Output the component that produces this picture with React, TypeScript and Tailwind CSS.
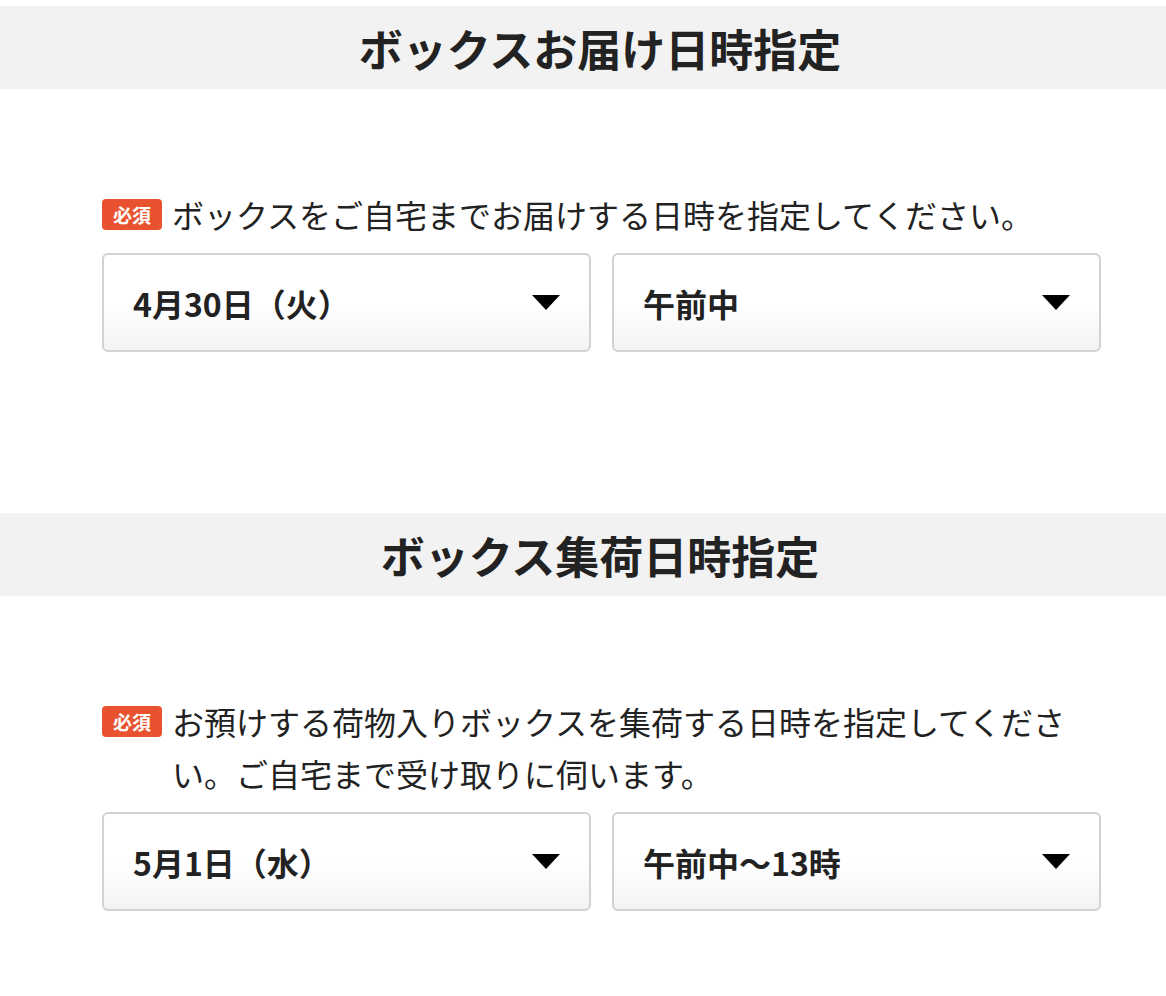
const font = { fontFamily: '"Noto Sans CJK JP", "Noto Sans", sans-serif' };

function Caret() {
  return (
    <svg width="28" height="15" viewBox="0 0 28 15" aria-hidden className="shrink-0">
      <path d="M0 0 H28 L14 15 Z" fill="#000" />
    </svg>
  );
}

function SelectBox({ value }: { value: string }) {
  return (
    <div className="flex h-[99px] flex-1 items-center justify-between rounded-[6px] border-2 border-[#d2d2d2] bg-gradient-to-b from-white from-50% to-[#f3f3f3] pl-[29px] pr-[29px]">
      <span className="text-[32px] font-bold text-[#222]">{value}</span>
      <Caret />
    </div>
  );
}

function Section({
  title,
  note,
  date,
  time,
}: {
  title: string;
  note: string;
  date: string;
  time: string;
}) {
  return (
    <section>
      <div className="flex h-[83px] items-center bg-[#f2f2f2]">
        <div className="ml-[101px] w-[998px] text-center text-[44px] font-bold leading-none text-[#222]">
          {title}
        </div>
      </div>
      <div className="ml-[102px] w-[999px] pt-[99px]">
        <div className="flex items-start gap-[10px]">
          <span className="mt-[11px] flex h-[31px] w-[60px] shrink-0 items-center justify-center rounded-[4px] bg-[#e8522f] text-[19px] font-bold leading-none text-white">
            必須
          </span>
          <p className="flex-1 text-[32px] leading-[52px] text-[#222]">{note}</p>
        </div>
        <div className="mt-[13px] flex gap-[21px]">
          <SelectBox value={date} />
          <SelectBox value={time} />
        </div>
      </div>
    </section>
  );
}

export default function App() {
  return (
    <div lang="ja" className="min-h-[996px] w-[1166px] bg-white pt-[6px]" style={font}>
      <Section
        title="ボックスお届け日時指定"
        note="ボックスをご自宅までお届けする日時を指定してください。"
        date="4月30日（火）"
        time="午前中"
      />
      <div className="h-[161px]" />
      <Section
        title="ボックス集荷日時指定"
        note="お預けする荷物入りボックスを集荷する日時を指定してください。ご自宅まで受け取りに伺います。"
        date="5月1日（水）"
        time="午前中〜13時"
      />
    </div>
  );
}
